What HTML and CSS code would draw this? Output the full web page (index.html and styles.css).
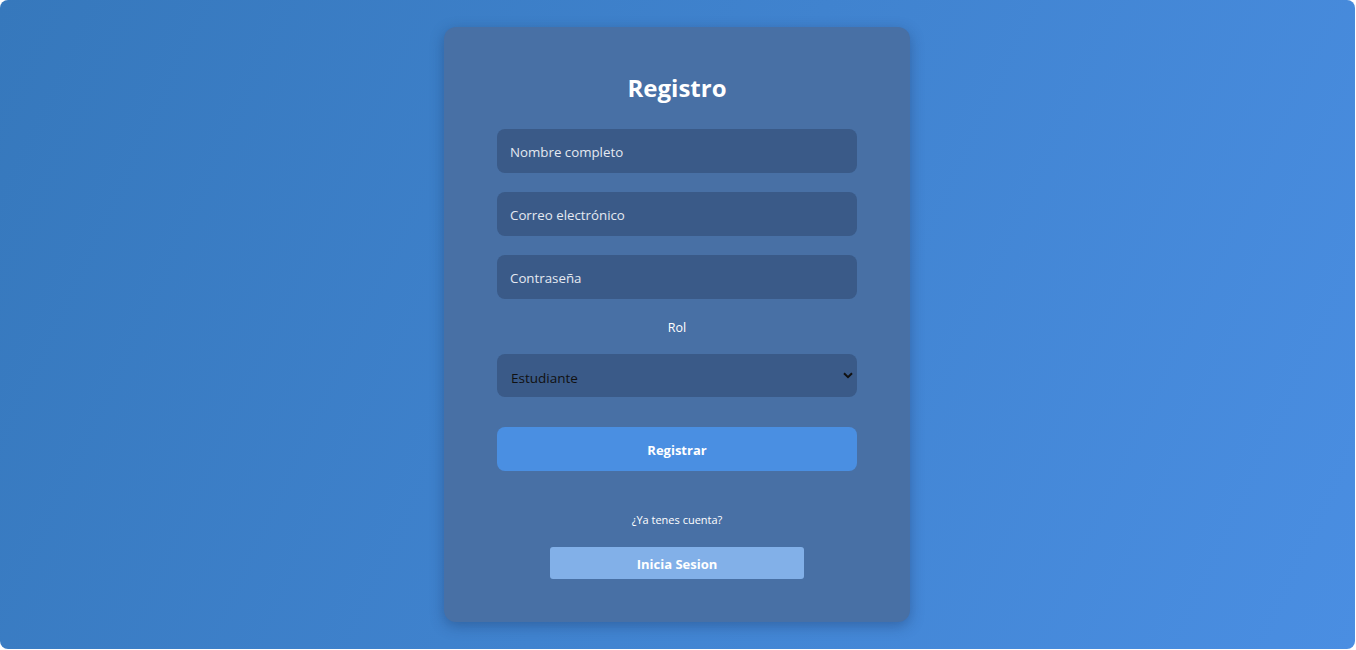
FILE: index.html
```html
<!DOCTYPE html>
<html lang="es">
<head>
<meta charset="utf-8">
<title>Registro</title>
<link rel="stylesheet" href="styles.css">
</head>
<body>
<div class="page">
  <form class="card">
    <h2 class="title">Registro</h2>
    <input class="field" type="text" placeholder="Nombre completo">
    <input class="field" type="email" placeholder="Correo electrónico">
    <input class="field" type="password" placeholder="Contraseña">
    <label class="label">Rol</label>
    <div class="select-wrap">
      <select class="select">
        <option>Estudiante</option>
        <option>Profesor</option>
      </select>
      <svg class="chevron" width="10" height="7" viewBox="0 0 10 7"><path d="M1 1.2 L5 5.2 L9 1.2" fill="none" stroke="#111" stroke-width="2"/></svg>
    </div>
    <button class="btn-primary" type="button">Registrar</button>
    <p class="hint">¿Ya tenes cuenta?</p>
    <button class="btn-secondary" type="button">Inicia Sesion</button>
  </form>
</div>
</body>
</html>
```
FILE: styles.css
```css
html, body {
  margin: 0;
  padding: 0;
  background: #ffffff;
}
body {
  font-family: "Open Sans", "Noto Sans", "Liberation Sans", sans-serif;
}
.page {
  width: 1355px;
  height: 649px;
  border-radius: 8px;
  background: linear-gradient(115deg, #3678bc 0%, #4a8ee2 100%);
  display: flex;
  justify-content: center;
  align-items: flex-start;
  box-sizing: border-box;
  padding: 27px 1px 0 0;
}
.card {
  width: 466px;
  height: 595px;
  box-sizing: border-box;
  background: #4870a5;
  border-radius: 12px;
  box-shadow: 0 4px 14px rgba(20, 40, 80, 0.35);
  padding: 40px 53px 0;
  display: flex;
  flex-direction: column;
  align-items: center;
}
.title {
  margin: 5px 0 25px;
  font-size: 24px;
  line-height: 32px;
  font-weight: 700;
  color: #ffffff;
}
.field {
  width: 360px;
  height: 44px;
  box-sizing: border-box;
  border: none;
  outline: none;
  border-radius: 8px;
  background: #3a5a88;
  color: #ffffff;
  font-family: inherit;
  font-size: 13.3px;
  padding: 2px 13px 0;
  margin: 0 0 19px;
}
.field::placeholder {
  color: #e4e9f1;
}
.label {
  margin: 0 0 17px;
  font-size: 12.5px;
  line-height: 19px;
  color: #ffffff;
}
.select-wrap {
  position: relative;
  width: 360px;
  height: 43px;
}
.select {
  width: 100%;
  height: 100%;
  appearance: none;
  -webkit-appearance: none;
  border: none;
  outline: none;
  border-radius: 8px;
  background: #3a5a88;
  color: #111111;
  font-family: inherit;
  font-size: 13.5px;
  padding: 4px 14px 0;
}
.chevron {
  position: absolute;
  right: 4px;
  top: 18px;
}
.btn-primary {
  margin-top: 30px;
  width: 360px;
  height: 44px;
  border: none;
  border-radius: 8px;
  background: #4a8fe2;
  color: #ffffff;
  font-family: inherit;
  font-size: 13px;
  font-weight: 700;
  padding-top: 2px;
}
.hint {
  margin: 41px 0 19px;
  font-size: 11px;
  line-height: 16px;
  color: #ffffff;
}
.btn-secondary {
  width: 254px;
  height: 32px;
  border: none;
  border-radius: 3px;
  background: #82b0e8;
  color: #ffffff;
  font-family: inherit;
  font-size: 13px;
  font-weight: 700;
  padding-top: 2px;
}
```
